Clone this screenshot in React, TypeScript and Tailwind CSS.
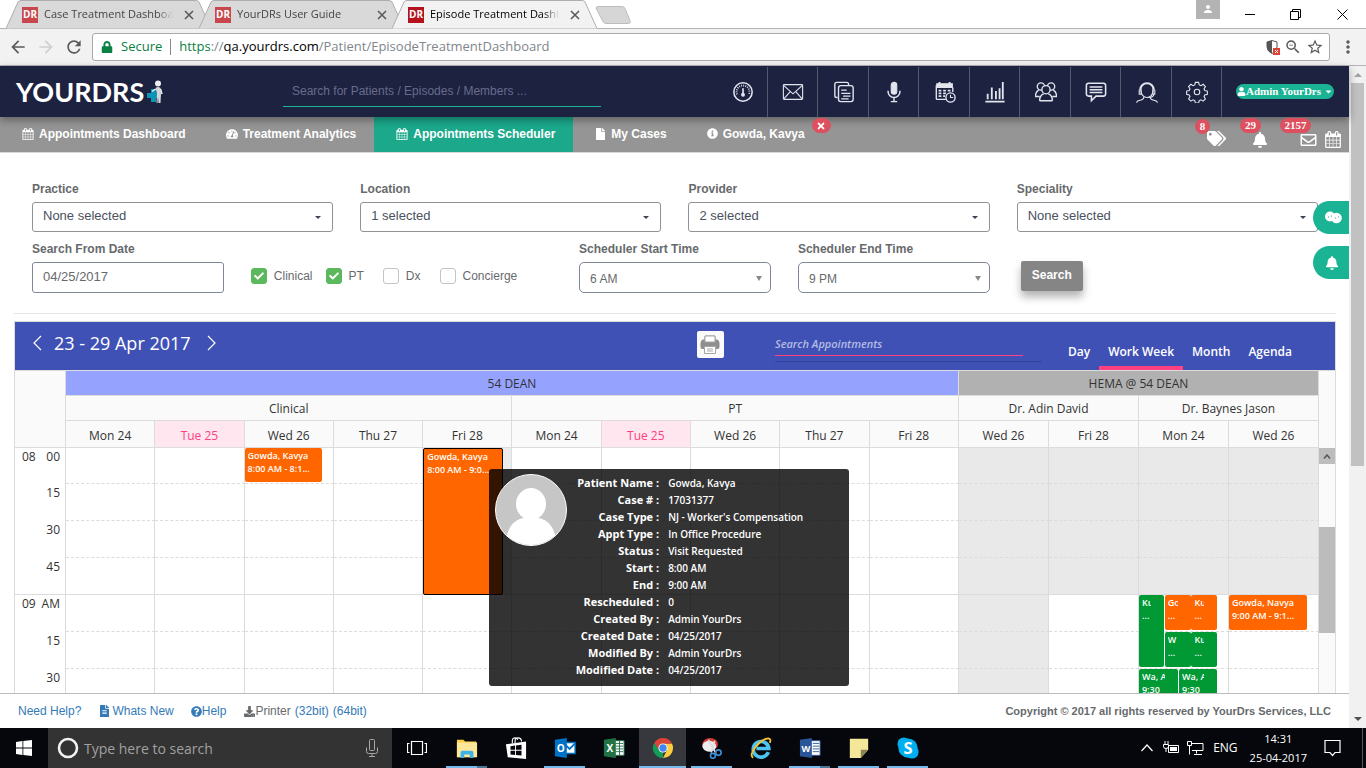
import React from 'react';
import {
  FaTachometerAlt, FaFile, FaInfoCircle, FaTimes, FaTags, FaBell, FaRegEnvelope, FaFileAlt,
  FaQuestionCircle, FaDownload, FaUser, FaCheck, FaCaretDown, FaLock,
} from 'react-icons/fa';
import { MdArrowBack, MdArrowForward, MdRefresh, MdMoreVert, MdPerson, MdStarBorder, MdZoomOut } from 'react-icons/md';

type IconProps = { className?: string };

function CalendarGrid({ className }: IconProps) {
  return (
    <svg viewBox="0 0 1664 1792" className={className} fill="currentColor" aria-hidden="true">
      <path d="M128 1664h288v-288h-288v288zm352 0h320v-288h-320v288zm-352-352h288v-320h-288v320zm352 0h320v-320h-320v320zm-352-384h288v-288h-288v288zm736 736h320v-288h-320v288zm-384-736h320v-288h-320v288zm768 736h288v-288h-288v288zm-384-352h320v-320h-320v320zm-352-864v-288q0-13-9.5-22.5t-22.5-9.5h-64q-13 0-22.5 9.5t-9.5 22.5v288q0 13 9.5 22.5t22.5 9.5h64q13 0 22.5-9.5t9.5-22.5zm736 864h288v-320h-288v320zm-384-384h320v-288h-320v288zm384 0h288v-288h-288v288zm32-480v-288q0-13-9.5-22.5t-22.5-9.5h-64q-13 0-22.5 9.5t-9.5 22.5v288q0 13 9.5 22.5t22.5 9.5h64q13 0 22.5-9.5t9.5-22.5zm384-64v1280q0 52-38 90t-90 38h-1408q-52 0-90-38t-38-90v-1280q0-52 38-90t90-38h128v-96q0-66 47-113t113-47h64q66 0 113 47t47 113v96h384v-96q0-66 47-113t113-47h64q66 0 113 47t47 113v96h128q52 0 90 38t38 90z" />
    </svg>
  );
}

/* ---------- Browser chrome ---------- */

function BrowserTab({ title, active }: { title: string; active?: boolean }) {
  return (
    <div className={`relative -mr-3 h-[29px] w-[205px] ${active ? 'z-10' : ''}`}>
      <svg viewBox="0 0 205 29" preserveAspectRatio="none" className="absolute inset-0 h-full w-full" aria-hidden="true">
        <path d="M0 28.5 L12 2 Q13 0.5 15 0.5 H190 Q192 0.5 193 2 L205 28.5" fill={active ? '#f2f2f2' : '#d9d9d9'} stroke="#aeaeae" />
      </svg>
      <div className="relative flex h-full items-center pl-4 pr-3.5">
        <span className={`flex h-4 w-4 shrink-0 items-center justify-center font-['Open_Sans',sans-serif] text-[10px] font-bold text-white ${active ? 'bg-[#b5121b]' : 'bg-[#c8474d]'}`}>DR</span>
        <button type="button" className={`ml-1.5 flex-1 overflow-hidden whitespace-nowrap text-left text-[11px] [mask-image:linear-gradient(to_right,black_88%,transparent)] ${active ? 'text-black' : 'text-[#444]'}`}>{title}</button>
        <button type="button" aria-label="Close tab" className="ml-2 flex h-4 w-4 items-center justify-center">
          <svg viewBox="0 0 10 10" className="h-2.5 w-2.5" stroke="#5a5a5a" strokeWidth="1.6" aria-hidden="true"><path d="M1 1 9 9M9 1 1 9" /></svg>
        </button>
      </div>
    </div>
  );
}

function Browser() {
  return (
    <div className="shrink-0 font-['Open_Sans',sans-serif]">
      <div className="flex h-[29px] justify-between border-b border-[#b3b3b3] bg-white">
        <div className="flex pl-1.5">
          <BrowserTab title="Case Treatment Dashboard" />
          <BrowserTab title="YourDRs User Guide" />
          <BrowserTab title="Episode Treatment Dashboard" active />
          <button type="button" aria-label="New tab" className="ml-2.5 mt-1.5 h-[19px]">
            <svg viewBox="0 0 36 19" className="h-[19px] w-9" aria-hidden="true"><path d="M2.500.5H27q2 0 3 2l5 12q1 3-1.500 3H11q-2 0-3-2L1.500 3Q.500.500 2.500.5Z" fill="#d6d6d6" stroke="#bcbcbc" /></svg>
          </button>
        </div>
        <div className="flex">
          <button type="button" aria-label="Profile" className="mr-[7px] flex h-[19px] w-6 justify-center bg-[#b3b3b3] pt-[3px] text-white"><MdPerson className="h-3 w-3" /></button>
          <button type="button" aria-label="Minimize" className="flex w-[46px] items-center justify-center"><svg viewBox="0 0 10 10" className="h-2.5 w-2.5" stroke="#000" aria-hidden="true"><path d="M0 5.500H10" /></svg></button>
          <button type="button" aria-label="Restore" className="flex w-[45px] items-center justify-center"><svg viewBox="0 0 11 11" className="h-[11px] w-[11px]" stroke="#000" fill="none" aria-hidden="true"><path d="M.5 2.500h8v8h-8zM2.500 2.500v-2h8v8h-2" /></svg></button>
          <button type="button" aria-label="Close" className="flex w-[48px] items-center justify-center"><svg viewBox="0 0 11 11" className="h-[11px] w-[11px]" stroke="#000" aria-hidden="true"><path d="M.5.5l10 10M10.500.5l-10 10" /></svg></button>
        </div>
      </div>
      <div className="flex h-[37px] items-center border-b border-[#b6b4b6] bg-[#f2f2f2] pl-2 pr-2 text-[#5a5a5a]">
        <button type="button" aria-label="Back"><MdArrowBack className="h-5 w-5" /></button>
        <button type="button" aria-label="Forward" className="ml-2 text-[#cfcfcf]"><MdArrowForward className="h-5 w-5" /></button>
        <button type="button" aria-label="Reload" className="ml-2"><MdRefresh className="h-5 w-5" /></button>
        <div className="ml-2 flex h-7 flex-1 items-center rounded-[3px] border border-[#a9a9a9] bg-white pl-2 pr-[5px]">
          <FaLock className="h-3 w-3 text-[#0b8043]" />
          <span className="ml-2 text-[13px] text-[#0b8043]">Secure</span>
          <span className="mx-2 h-4 w-px bg-[#8a8a8a]" />
          <span className="flex-1 text-[13px] text-[#80868b]"><span className="text-[#0b8043]">https</span>://<span className="text-black">qa.yourdrs.com</span>/Patient/EpisodeTreatmentDashboard</span>
          <svg viewBox="0 0 14 15" className="h-[15px] w-3.5" aria-hidden="true">
            <path d="M6 .5 11 2v5q0 4-5 6.500Q1 11 1 7V2Z" fill="#fff" stroke="#555" />
            <path d="M6 .5V13.500Q1 11 1 7V2Z" fill="#555" />
            <rect x="7" y="8" width="7" height="7" fill="#dd4035" /><path d="M9 10l3 3m0-3-3 3" stroke="#fff" />
          </svg>
          <MdZoomOut className="ml-1 h-[18px] w-[18px]" />
          <MdStarBorder className="ml-1 h-[18px] w-[18px]" />
        </div>
        <button type="button" aria-label="Menu" className="ml-2"><MdMoreVert className="h-5 w-5" /></button>
      </div>
    </div>
  );
}

/* ---------- Application header ---------- */

const toolIcons: { label: string; art: React.ReactNode }[] = [
  { label: 'Dashboard', art: <><circle cx="12" cy="12" r="10" strokeWidth="1.700" /><path d="M5.500 14.500A7 7 0 1 1 18.500 14.500" strokeWidth="2" strokeDasharray="1 1.300" /><path d="M12 8v5" strokeWidth="1.800" /><circle cx="12" cy="15" r="1.500" fill="currentColor" /></> },
  { label: 'Mail', art: <><rect x="1.500" y="4" width="21" height="16" rx="1" /><path d="m2 5 10 9 10-9M2 19.500l7-8M22 19.500l-7-8" /></> },
  { label: 'Documents', art: <><path d="M5 18H4q-2 0-2-2V3.500q0-2 2-2h11q2 0 2 2V5" strokeWidth="1.500" /><rect x="6" y="5" width="16" height="17.500" rx="2.500" strokeWidth="1.500" /><path d="M9 10h6M9 13.500h10M11 16.500h8M9 19.500h8" /></> },
  { label: 'Dictation', art: <><rect x="9" y="1.500" width="6" height="13" rx="3" fill="currentColor" /><path d="M5.500 10.500v1a6.500 6.500 0 0 0 13 0v-1M12 18v4.500M8.500 22.500h7" strokeWidth="1.600" /></> },
  { label: 'Schedule', art: <><path d="M3 3h17v4H3z" fill="currentColor" /><path d="M6 1v4M17 1v4" strokeWidth="2" /><path d="M2.500 5v14q0 1 1 1H13M20.500 7v5" strokeWidth="1.500" /><path d="M5 10.500h3M10 10.500h3M15 10.500h3M5 13.500h3M10 13.500h3M5 16.500h3M10 16.500h2" strokeWidth="2" /><circle cx="18" cy="18" r="5" strokeWidth="1.500" /><path d="M18 15v3h3" /></> },
  { label: 'Reports', art: <path d="M1.500 22.500h21M4 14v6M8.500 7v13M13 11v9M17 8v12M20.500 1v19" strokeWidth="2" /> },
  { label: 'Teams', art: <><circle cx="6.500" cy="6" r="4" strokeWidth="1.500" /><circle cx="17.500" cy="6" r="4" strokeWidth="1.500" /><circle cx="12" cy="9.500" r="4.500" fill="#1d2240" strokeWidth="1.500" /><path d="M4 10q-3.500 2-3.500 7H5M20 10q3.500 2 3.500 7H19M5 21.500q0-6 4.500-7.500M19 21.500q0-6-4.500-7.500M5 21.500h14" strokeWidth="1.600" /></> },
  { label: 'Messages', art: <><path d="M4 2.500h16q2.500 0 2.500 2.500v9q0 2.500-2.500 2.500h-8l-5 5v-5H4Q1.500 16.500 1.500 14V5q0-2.500 2.500-2.500Z" strokeWidth="1.700" /><path d="M5 6.500h14M5 9.500h14M5 12.500h14" strokeWidth="1.500" /></> },
  { label: 'Support', art: <><path d="M4 10a8 8 0 0 1 16 0M5.500 11a6.500 7 0 0 0 13 0V9a6.500 6 0 0 0-13 0Z" /><path d="M3.500 9.500v5h2v-5M20.500 9.500v5h-2v-5M19.500 15q-1 3-6 3M8.500 17.500q0 3-4 3.500Q1 21.500.5 23.500M15.500 17.500q0 3 4 3.500 3.500.5 4 2.500" /></> },
  { label: 'Settings', art: <><circle cx="12" cy="12" r="3" /><path d="M10.200 1.500h3.600l.6 2.800 1.900.8 2.400-1.500 2.500 2.500-1.500 2.400.8 1.900 2.800.6v3.600l-2.800.6-.8 1.900 1.500 2.400-2.500 2.500-2.400-1.500-1.900.8-.6 2.800h-3.600l-.6-2.800-1.900-.8-2.400 1.500-2.500-2.500 1.500-2.400-.8-1.900-2.800-.6v-3.600l2.800-.6.8-1.900-1.500-2.400 2.500-2.500 2.400 1.500 1.900-.8Z" /></> },
];

function AppHeader() {
  return (
    <header className="relative z-20 flex h-[51px] shrink-0 items-center bg-[#1d2240] shadow-[0_3px_8px_rgba(0,0,0,0.35)]">
      <a href="#home" className="ml-4 flex w-[150px] items-center text-white">
        <span className="font-['Lato',sans-serif] text-[27px] font-bold leading-none">YOURDRS</span>
        <svg viewBox="0 0 18 24" className="ml-0.5 h-6 w-[18px]" aria-hidden="true">
          <path d="M5 9h5v4h4v5h-4v4H5v-4H1v-5h4z" fill="#0d93b5" />
          <circle cx="12" cy="3.500" r="3" fill="#eee" />
          <path d="M9.500 8q2.500-2 5 0l.5 6-.5 9h-2l-.5-6-.5 6h-1l.5-9Z" fill="#d3d6da" />
          <path d="M9.500 9 6 11.500M14.500 9l1.500 5" stroke="#eee" strokeWidth="1.500" />
        </svg>
      </a>
      <input aria-label="Search for Patients, Episodes or Members" placeholder="Search for Patients / Episodes / Members ..." className="ml-[117px] h-[31px] w-[318px] border-b border-[#1ab394] bg-transparent px-[9px] text-[12px] outline-none placeholder:text-[#676c8c]" />
      <div className="flex-1" />
      <div className="flex h-[50px] w-[505px]">
        {toolIcons.map((t) => (
          <button key={t.label} type="button" aria-label={t.label} className="flex flex-1 items-center justify-center border-r border-[#555a6b] pl-0.5 text-[#e3e5ee]">
            <svg viewBox="0 0 24 24" className="h-[22px] w-[22px]" fill="none" stroke="currentColor" strokeWidth="1.200" aria-hidden="true">{t.art}</svg>
          </button>
        ))}
      </div>
      <button type="button" className="ml-3.5 mr-[15px] flex h-[15px] w-[98px] items-center justify-center whitespace-nowrap rounded-full bg-[#1ab394] font-['Liberation_Serif',serif] text-[11px] font-bold text-white">
        <FaUser className="h-[9px] w-[9px] shrink-0" />Admin YourDrs<FaCaretDown className="ml-[3px] h-[9px] w-[9px] shrink-0" />
      </button>
    </header>
  );
}

function NavItem({ icon, text, active }: { icon: React.ReactNode; text: string; active?: boolean }) {
  return (
    <a href="#section" className={`flex h-full items-center gap-[5px] whitespace-nowrap pb-0.5 pl-[22px] pr-[18px] text-[12px] font-bold text-white ${active ? 'bg-[#1ba88b]' : ''}`}>{icon}{text}</a>
  );
}

function Badge({ children, className }: { children: React.ReactNode; className: string }) {
  return <span className={`absolute flex h-[15px] items-center justify-center rounded-full bg-[#dd5060] font-['Liberation_Serif',serif] text-[11px] font-bold text-white ${className}`}>{children}</span>;
}

function Nav() {
  return (
    <nav className="flex h-9 shrink-0 justify-between border-b border-[#d8d8d8] bg-[#959595]">
      <div className="flex h-full">
        <NavItem icon={<CalendarGrid className="h-3 w-3" />} text="Appointments Dashboard" />
        <NavItem icon={<FaTachometerAlt className="h-3 w-3" />} text="Treatment Analytics" />
        <NavItem icon={<CalendarGrid className="h-3 w-3" />} text="Appointments Scheduler" active />
        <NavItem icon={<FaFile className="h-3 w-[11px]" />} text="My Cases" />
        <div className="relative z-30">
          <NavItem icon={<FaInfoCircle className="h-[11px] w-[11px]" />} text="Gowda, Kavya" />
          <button type="button" aria-label="Close Gowda, Kavya" className="absolute -right-2 top-px flex h-[15px] w-[19px] items-center justify-center rounded-full bg-[#dd5060] text-white"><FaTimes className="h-2.5 w-2.5" /></button>
        </div>
      </div>
      <div className="relative z-30 flex items-end pb-1 pr-2 text-white">
        <a href="#tags" aria-label="Tags" className="relative mr-[26px]"><FaTags className="h-[19px] w-[19px]" /><Badge className="-left-3 -top-2.5 w-[15px]">8</Badge></a>
        <a href="#alerts" aria-label="Alerts" className="relative mr-8 block"><FaBell className="h-4 w-4" /><Badge className="-left-3 -top-3.5 w-[21px]">29</Badge></a>
        <a href="#mail" aria-label="Mail" className="relative mr-2"><FaRegEnvelope className="h-4 w-[17px]" /><Badge className="-left-5 -top-3.5 w-[31px]">2157</Badge></a>
        <a href="#calendar" aria-label="Calendar"><CalendarGrid className="h-[17px] w-4" /></a>
      </div>
    </nav>
  );
}

/* ---------- Filters ---------- */

const labelCls = 'mb-1 block h-[18px] text-[12px] font-bold leading-[18px] text-[#676a6c]';

function MultiSelect({ id, label, value }: { id: string; label: string; value: string }) {
  return (
    <div className="col-span-3">
      <label htmlFor={id} className={labelCls}>{label}</label>
      <div className="relative">
        <select id={id} className="h-[30px] w-full appearance-none rounded-[3px] border border-[#8f9297] bg-white px-2.5 pb-[3px] text-[13px] text-[#4a5160] outline-none"><option>{value}</option></select>
        <svg viewBox="0 0 6 3" className="pointer-events-none absolute right-3 top-3.5 h-[3px] w-1.5" aria-hidden="true"><path d="M0 0h6L3 3Z" fill="#3b4452" /></svg>
      </div>
    </div>
  );
}

function TimeSelect({ id, label, value }: { id: string; label: string; value: string }) {
  return (
    <>
      <label htmlFor={id} className={labelCls}>{label}</label>
      <div className="relative">
        <select id={id} className="h-[31px] w-full appearance-none rounded-[5px] border border-[#80879a] bg-white px-2.5 pt-0.5 text-[12px] text-[#676a6c] outline-none"><option>{value}</option></select>
        <svg viewBox="0 0 6 5" className="pointer-events-none absolute right-[9px] top-3.5 h-[5px] w-1.5" aria-hidden="true"><path d="M0 0h6L3 5Z" fill="#888" /></svg>
      </div>
    </>
  );
}

function Check({ label, on, gap }: { label: string; on?: boolean; gap: string }) {
  return (
    <label className={`flex items-center gap-[7px] text-[12px] text-[#676a6c] ${gap}`}>
      <span className="relative flex h-4 w-4">
        <input type="checkbox" defaultChecked={on} className="peer h-4 w-4 appearance-none rounded-[3px] border border-[#c4c4c4] bg-white checked:border-[#5cb85c] checked:bg-[#5cb85c]" />
        <FaCheck className="pointer-events-none absolute left-[3px] top-[3px] hidden h-2.5 w-2.5 text-white peer-checked:block" />
      </span>
      {label}
    </label>
  );
}

function Filters() {
  return (
    <form className="ml-[14px] mr-[13px] grid shrink-0 grid-cols-12 gap-x-[27px] gap-y-2 border-b border-[#e4e4e4] px-[18px] pb-5 pt-[27px]" onSubmit={(e) => e.preventDefault()}>
      <MultiSelect id="practice" label="Practice" value="None selected" />
      <MultiSelect id="location" label="Location" value="1 selected" />
      <MultiSelect id="provider" label="Provider" value="2 selected" />
      <MultiSelect id="speciality" label="Speciality" value="None selected" />
      <div className="col-span-2">
        <label htmlFor="from" className={labelCls}>Search From Date</label>
        <input id="from" defaultValue="04/25/2017" className="h-[31px] w-full rounded-[3px] border border-[#80879a] bg-white px-2.5 pb-0.5 text-[13px] text-[#676a6c] outline-none" />
      </div>
      <div className="col-span-3 flex items-center whitespace-nowrap pt-[19px]">
        <Check label="Clinical" on gap="" />
        <Check label="PT" on gap="ml-[13px]" />
        <Check label="Dx" gap="ml-[19px]" />
        <Check label="Concierge" gap="ml-[19px]" />
      </div>
      <div className="col-span-2"><TimeSelect id="start" label="Scheduler Start Time" value="6 AM" /></div>
      <div className="col-span-2"><TimeSelect id="end" label="Scheduler End Time" value="9 PM" /></div>
      <div className="col-span-3 pl-1 pt-[21px]">
        <button type="submit" className="h-[30px] w-[62px] rounded-[2px] bg-[#858585] pb-[3px] text-[12px] font-bold text-white shadow-[0_6px_8px_rgba(0,0,0,0.3)]">Search</button>
      </div>
    </form>
  );
}

/* ---------- Scheduler ---------- */

type Appt = { box: string; color: 'orange' | 'green'; name: string; time: string; selected?: boolean };

const days = ['Mon 24', 'Tue 25', 'Wed 26', 'Thu 27', 'Fri 28', 'Mon 24', 'Tue 25', 'Wed 26', 'Thu 27', 'Fri 28', 'Wed 26', 'Fri 28', 'Mon 24', 'Wed 26'];

const slots: { hour: string; minute: string; appts: Record<number, Appt[]> }[] = [
  {
    hour: '08', minute: '00', appts: {
      2: [{ box: 'left-0 w-[88%] h-[34px]', color: 'orange', name: 'Gowda, Kavya', time: '8:00 AM - 8:1...' }],
      4: [{ box: 'left-0 w-[90%] h-[147px]', color: 'orange', name: 'Gowda, Kavya', time: '8:00 AM - 9:0...', selected: true }],
    },
  },
  { hour: '', minute: '15', appts: {} },
  { hour: '', minute: '30', appts: {} },
  { hour: '', minute: '45', appts: {} },
  {
    hour: '09', minute: 'AM', appts: {
      12: [
        { box: 'left-0 w-[28%] h-[72px]', color: 'green', name: 'Ku', time: '...' },
        { box: 'left-[29%] w-[29%] h-[35px]', color: 'orange', name: 'Go', time: '...' },
        { box: 'left-[59%] w-[29%] h-[35px]', color: 'orange', name: 'Ku', time: '...' },
      ],
      13: [{ box: 'left-0 w-[88%] h-[35px]', color: 'orange', name: 'Gowda, Navya', time: '9:00 AM - 9:1...' }],
    },
  },
  {
    hour: '', minute: '15', appts: {
      12: [
        { box: 'left-[29%] w-[29%] h-[35px]', color: 'green', name: 'W', time: '...' },
        { box: 'left-[59%] w-[29%] h-[35px]', color: 'green', name: 'Ku', time: '...' },
      ],
    },
  },
  {
    hour: '', minute: '30', appts: {
      12: [
        { box: 'left-0 w-[44%] h-[35px]', color: 'green', name: 'Wa, A', time: '9:30' },
        { box: 'left-[45%] w-[43%] h-[35px]', color: 'green', name: 'Wa, A', time: '9:30' },
      ],
    },
  },
];

function Event({ a }: { a: Appt }) {
  return (
    <div className={`absolute top-0 z-[1] overflow-hidden rounded-[2px] pl-[3px] pt-px text-[9px] font-semibold leading-[13px] text-white ${a.box} ${a.color === 'orange' ? 'bg-[#ff6600]' : 'bg-[#009933]'} ${a.selected ? 'border border-black' : ''}`}>
      <div className="mr-[13px] overflow-hidden whitespace-nowrap">{a.name}</div>
      <div className="whitespace-nowrap">{a.time}</div>
    </div>
  );
}

const details: [string, string][] = [
  ['Patient Name', 'Gowda, Kavya'], ['Case #', '17031377'], ['Case Type', "NJ - Worker's Compensation"],
  ['Appt Type', 'In Office Procedure'], ['Status', 'Visit Requested'], ['Start', '8:00 AM'], ['End', '9:00 AM'],
  ['Rescheduled', '0'], ['Created By', 'Admin YourDrs'], ['Created Date', '04/25/2017'],
  ['Modified By', 'Admin YourDrs'], ['Modified Date', '04/25/2017'],
];

function Tooltip() {
  return (
    <div role="tooltip" className="absolute left-[66px] top-[21px] z-10 flex h-[217px] w-[360px] rounded-[3px] bg-black/80 pl-1.5 pt-[5px] text-left text-white">
      <svg viewBox="0 0 72 72" className="h-[72px] w-[72px] shrink-0" aria-hidden="true">
        <clipPath id="avatar"><circle cx="36" cy="36" r="35" /></clipPath>
        <circle cx="36" cy="36" r="35.500" fill="#c6c6c6" stroke="#fff" />
        <g clipPath="url(#avatar)" fill="#fff"><ellipse cx="36" cy="30" rx="15" ry="16" /><path d="M11 66q3-23 25-23t25 23v8H11Z" /></g>
      </svg>
      <dl className="grid flex-1 auto-rows-[17px] grid-cols-[92px_1fr] gap-x-[9px] whitespace-nowrap">
        {details.map(([k, v]) => (
          <React.Fragment key={k}>
            <dt className="text-right text-[11px] font-bold leading-[17px]">{k} :</dt>
            <dd className="pt-px text-[10px] font-semibold leading-[17px]">{v}</dd>
          </React.Fragment>
        ))}
      </dl>
    </div>
  );
}

const cell = 'border-b border-r border-[#dcdcdc] px-0 pb-0 pt-px font-normal text-center leading-[18px]';

function Scheduler() {
  return (
    <section className="ml-[14px] mr-[13px] mt-[7px] flex min-h-0 flex-1 flex-col overflow-hidden border-x border-t border-[#dcdcdc] font-['Open_Sans',sans-serif]">
      <div className="flex h-[49px] shrink-0 border-b border-[#dcdcdc] bg-[#3f51b5] text-white">
        <div className="flex h-[42px] flex-1 items-center pl-[17px]">
          <button type="button" aria-label="Previous week"><svg viewBox="0 0 10 16" className="h-4 w-2.5" fill="none" stroke="#fff" strokeWidth="1.200" aria-hidden="true"><path d="M9 1 2 8l7 7" /></svg></button>
          <h1 className="ml-3 mr-4 whitespace-nowrap text-[18px] font-medium">23 - 29 Apr 2017</h1>
          <button type="button" aria-label="Next week"><svg viewBox="0 0 10 16" className="h-4 w-2.5" fill="none" stroke="#fff" strokeWidth="1.200" aria-hidden="true"><path d="m1 1 7 7-7 7" /></svg></button>
        </div>
        <button type="button" aria-label="Print" className="mt-[9px] flex h-[27px] w-[27px] items-center justify-center rounded-[2px] bg-[#fafafa]">
          <svg viewBox="0 0 20 19" className="h-[19px] w-5" aria-hidden="true">
            <path d="M5 7V1h10v6" fill="#fff" stroke="#999" /><path d="M2.500 4.500h15Q19.500 6 19.500 8v4q0 2-2 2h-15q-2 0-2-2V8q0-2 2-3.500Z" fill="#8f8f8f" /><path d="M5 1h10v6H5zM4.500 11.500h11v7h-11z" fill="#fff" stroke="#a5a5a5" /><path d="M7 14h6M7 16h6" stroke="#aaa" />
          </svg>
        </button>
        <div className="ml-[51px] mr-[17px] h-10 w-[267px] border-b border-[#34449c]">
          <input aria-label="Search Appointments" placeholder="Search Appointments" className="mt-[10px] block h-6 w-[248px] border-b border-[#ff4081] bg-transparent text-[11px] font-semibold italic outline-none placeholder:text-[#b4bbe4]" />
        </div>
        <div className="mr-[34px] flex items-stretch text-[12px] font-semibold">
          {['Day', 'Work Week', 'Month', 'Agenda'].map((t) => (
            <button key={t} type="button" className={`border-b-4 px-[9px] pt-[15px] ${t === 'Work Week' ? 'border-[#ff4081]' : 'border-transparent'}`}>{t}</button>
          ))}
        </div>
      </div>
      <div className="flex min-h-0 flex-1 items-start overflow-hidden">
        <table className="w-0 flex-1 table-fixed border-separate border-spacing-0 text-[12px] text-[#333]">
          <colgroup><col className="w-[51px]" />{days.map((_, i) => <col key={i} className={i > 9 ? 'w-[90px]' : ''} />)}</colgroup>
          <thead className="bg-[#fafafa]">
            <tr className="h-[25px]">
              <td rowSpan={3} className={cell} />
              <th scope="colgroup" colSpan={10} className={`${cell} bg-[#95a3ff]`}>54 DEAN</th>
              <th scope="colgroup" colSpan={4} className={`${cell} bg-[#b1b1b1]`}>HEMA @ 54 DEAN</th>
            </tr>
            <tr className="h-[25px]">
              <th scope="colgroup" colSpan={5} className={cell}>Clinical</th>
              <th scope="colgroup" colSpan={5} className={cell}>PT</th>
              <th scope="colgroup" colSpan={2} className={cell}>Dr. Adin David</th>
              <th scope="colgroup" colSpan={2} className={cell}>Dr. Baynes Jason</th>
            </tr>
            <tr className="h-[27px]">
              {days.map((d, i) => <th key={i} scope="col" className={`border-b border-r border-[#dcdcdc] px-0 pb-0 pt-[3px] text-center font-normal leading-[18px] ${d === 'Tue 25' ? 'bg-[#ffe6ef] text-[#ff4081]' : ''}`}>{d}</th>)}
            </tr>
          </thead>
          <tbody>
            {slots.map((s, r) => (
              <tr key={r} className={r === 0 ? 'h-9' : 'h-[37px]'}>
                <th scope="row" className={`border-r border-[#dcdcdc] p-0 align-top font-normal ${r === 3 ? 'border-b' : ''}`}>
                  <div className="flex justify-between pl-[7px] pr-[5px] leading-[17px]"><span>{s.hour}</span><span>{s.minute}</span></div>
                </th>
                {days.map((_, c) => {
                  const shade = (c >= 10 && r < 4) || c === 10 ? 'bg-[#e9e9e9]' : c === 4 && r < 4 ? 'bg-[#ececec]' : '';
                  return (
                    <td key={c} className={`relative border-b border-r border-[#dcdcdc] p-0 text-left ${r === 3 ? '' : '[border-bottom-style:dashed]'} ${shade}`}>
                      {(s.appts[c] ?? []).map((a, i) => <Event key={i} a={a} />)}
                      {r === 0 && c === 4 && <Tooltip />}
                    </td>
                  );
                })}
              </tr>
            ))}
          </tbody>
        </table>
        <div className="flex h-full w-4 shrink-0 flex-col bg-[#fafafa]">
          <div className="h-[77px] shrink-0" />
          <button type="button" aria-label="Scroll up" className="flex h-4 w-full shrink-0 items-center justify-center bg-[#bdbdbd]"><svg viewBox="0 0 8 5" className="h-[5px] w-2" fill="none" stroke="#555" strokeWidth="1.500" aria-hidden="true"><path d="m1 4.500 3-3.500 3 3.500" /></svg></button>
          <div className="mt-[63px] h-[106px] w-full shrink-0 bg-[#bcbcbc]" />
        </div>
      </div>
    </section>
  );
}

function SideTabs() {
  return (
    <div className="absolute right-0 top-[135px] z-20 flex flex-col gap-3 text-white">
      <button type="button" aria-label="Reactions" className="flex h-[33px] w-9 items-center justify-center rounded-l-full bg-[#1ab394] pl-1">
        <svg viewBox="0 0 18 13" className="h-[13px] w-[18px]" aria-hidden="true"><circle cx="6" cy="5.500" r="5" fill="#fff" /><circle cx="12.500" cy="7" r="5.300" fill="#fff" /><path d="M4 6h1M7 5h1M11 7h1M14 6h1" stroke="#1ab394" fill="none" /></svg>
      </button>
      <button type="button" aria-label="Notifications" className="flex h-[33px] w-9 items-center justify-center rounded-l-full bg-[#1ab394] pl-0.5"><FaBell className="h-3.5 w-3.5" /></button>
    </div>
  );
}

function Footer() {
  const link = 'flex items-center text-[#337ab7]';
  return (
    <footer className="flex h-[35px] shrink-0 items-center justify-between border-t border-[#bbb] bg-white pl-[18px] pr-[18px] text-[12px] text-[#676a6c]">
      <div className="flex whitespace-nowrap">
        <a href="#need-help" className={link}>Need Help?</a>
        <a href="#new" className={`${link} ml-[18px] gap-0.5`}><FaFileAlt className="h-3 w-[11px]" />Whats New</a>
        <a href="#help" className={`${link} ml-[17px]`}><FaQuestionCircle className="h-[11px] w-[11px]" />Help</a>
        <span className="ml-[18px] flex items-center gap-1"><span className="flex items-center"><FaDownload className="h-[11px] w-[11px]" />Printer</span><a href="#p32" className={link}>(32bit)</a><a href="#p64" className={link}>(64bit)</a></span>
      </div>
      <p className="text-[11px] font-bold">Copyright © 2017 all rights reserved by YourDrs Services, LLC</p>
    </footer>
  );
}

/* ---------- Taskbar ---------- */

const txt = { fontFamily: 'Open Sans, sans-serif', fontWeight: 700, fill: '#fff', textAnchor: 'middle' as const };

const apps: { name: string; line?: 'one' | 'two' | 'full'; art: React.ReactNode }[] = [
  { name: 'File Explorer', line: 'two', art: <><path d="M1 3h7l2 2h12v17H1z" fill="#ffcf4a" /><path d="M1 6h22v16H1z" fill="#ffe79a" /><path d="M5 23v-6q0-2 2-2h10q2 0 2 2v6h-4v-4H9v4z" fill="#3db2e8" /></> },
  { name: 'Store', art: <><path d="M8 7V4q0-3 3-3 2 0 3 2M11 7V4q0-3 3-3 4 0 4 4" fill="none" stroke="#fff" strokeWidth="1.200" /><path d="m1 8 22-3v19L3 22z" fill="#fff" /><path d="m6 10 5-.6V14H6zM12 9.200l6-.8V14h-6zM6 15h5v4.500L6 19zM12 15h6v5.300l-6-.7z" fill="#05070c" /></> },
  { name: 'Outlook', line: 'one', art: <><path d="M11 6h12v12H11z" fill="#fff" stroke="#0072c6" strokeWidth="1.500" /><path d="m12 8 5 5 6-6" fill="none" stroke="#0072c6" strokeWidth="2" /><path d="m1 3 13-2v22L1 21z" fill="#0072c6" /><text x="7.500" y="16" fontSize="11" {...txt}>O</text></> },
  { name: 'Excel', art: <><path d="M12 4h11v16H12z" fill="#fff" stroke="#207245" /><path d="M14 7h8M14 10h8M14 13h8M14 16h8M18 4v16" stroke="#207245" /><path d="m1 3 13-2v22L1 21z" fill="#207245" /><text x="7.500" y="16" fontSize="11" {...txt}>X</text></> },
  { name: 'Chrome', line: 'full', art: <><path d="M12 12v11A11 11 0 0 1 2.470 6.500Z" fill="#0f9d58" /><path d="M12 7h9.800q1.200 2.500 1.200 5a11 11 0 0 1-11 11l4.400-8.500z" fill="#ffcd40" /><path d="M7.600 14.500 2.470 6.500Q5.500 1 12 1q7 0 9.800 6H12Z" fill="#db4437" /><circle cx="12" cy="12" r="5" fill="#fff" /><circle cx="12" cy="12" r="4" fill="#4285f4" /></> },
  { name: 'Snipping Tool', line: 'one', art: <><ellipse cx="10" cy="8" rx="8.500" ry="7" fill="#d33a34" /><ellipse cx="9" cy="10" rx="7.500" ry="6" fill="#eee" /><path d="m8 3 8 14M15 4l-4 13" stroke="#ddd" strokeWidth="2" /><circle cx="19" cy="17" r="3" fill="none" stroke="#3c8ed0" strokeWidth="1.800" /><circle cx="13" cy="20.500" r="2.700" fill="none" stroke="#3c8ed0" strokeWidth="1.800" /></> },
  { name: 'Internet Explorer', art: <><path d="M20 16.500A8.500 8.500 0 1 1 20.500 12.500H7" fill="none" stroke="#4cc3f0" strokeWidth="4" /><path d="M3.500 22.500Q-1 20 6 11 14 1.500 20 1.500q3.500.5 1.500 5" fill="none" stroke="#f6c52c" strokeWidth="2" /></> },
  { name: 'Word', line: 'two', art: <><path d="M12 4h11v16H12z" fill="#fff" stroke="#2a5699" /><path d="M15 7h7M15 10h7M15 13h7M15 16h7" stroke="#2a5699" /><path d="m1 3 13-2v22L1 21z" fill="#2a5699" /><text x="7.500" y="16" fontSize="10" {...txt}>W</text></> },
  { name: 'Sticky Notes', line: 'one', art: <><path d="M2 2h20v12l-8 9H2z" fill="#f4e79a" /><path d="M14 14h8l-8 9z" fill="#8d8550" /></> },
  { name: 'Skype', line: 'one', art: <><circle cx="7.500" cy="7.500" r="7" fill="#00aff0" /><circle cx="16.500" cy="16.500" r="7" fill="#00aff0" /><circle cx="12" cy="12" r="10.500" fill="#00aff0" /><text x="12" y="18" fontSize="18" {...txt}>S</text></> },
];

function Taskbar() {
  return (
    <div className="flex h-10 shrink-0 bg-[#05070c] font-['Open_Sans',sans-serif] text-white">
      <button type="button" aria-label="Start" className="flex w-12 items-center justify-center"><svg viewBox="0 0 16 16" className="h-4 w-4" fill="#fff" aria-hidden="true"><path d="m0 2 6.500-.9v6.400H0zM7.300 1 16 0v7.500H7.300zM0 8.400h6.500v6.500L0 14zM7.300 8.400H16V16l-8.700-1z" /></svg></button>
      <div className="flex w-[344px] items-center bg-[#333] pl-[9px] pr-3.5">
        <svg viewBox="0 0 22 22" className="h-[22px] w-[22px]" fill="none" stroke="#f2f2f2" strokeWidth="2.600" aria-hidden="true"><circle cx="11" cy="11" r="9" /></svg>
        <input aria-label="Type here to search" placeholder="Type here to search" className="ml-[5px] w-0 flex-1 bg-transparent text-[14px] outline-none placeholder:text-[#a0a0a0]" />
        <svg viewBox="0 0 12 18" className="h-[18px] w-3" fill="none" stroke="#a8a8a8" aria-hidden="true"><rect x="3.500" y=".5" width="5" height="11" rx="1" /><path d="M.5 8.500v4q0 2 2 2h7q2 0 2-2v-4M6 14.500v3M3 17.500h6" /></svg>
      </div>
      <button type="button" aria-label="Task View" className="flex w-[50px] items-center justify-center"><svg viewBox="0 0 20 16" className="h-4 w-5" fill="none" stroke="#fff" strokeWidth="1.200" aria-hidden="true"><path d="M4.500 1.500h11v13h-11zM2.500 3.500h-2v9h2M17.500 3.500h2v9h-2" /></svg></button>
      {apps.map((a) => (
        <button key={a.name} type="button" aria-label={a.name} className={`relative flex items-center justify-center ${a.line === 'full' ? 'mx-px w-[47px] bg-[#36383d]' : 'w-[49px]'}`}>
          <svg viewBox="0 0 24 24" className="h-[22px] w-[22px]" aria-hidden="true">{a.art}</svg>
          {a.line && <span className={`absolute bottom-0 flex h-0.5 justify-end bg-[#76b9ed] ${a.line === 'full' ? 'inset-x-0' : 'inset-x-1'}`}>{a.line === 'two' && <span className="h-0.5 w-2.5 bg-[#4b7699]" />}</span>}
        </button>
      ))}
      <div className="flex-1" />
      <div className="flex items-center pr-[3px] text-[12px]">
        <svg viewBox="0 0 12 8" className="h-2 w-3" fill="none" stroke="#fff" strokeWidth="1.200" aria-hidden="true"><path d="m.5 7 5.500-6 5.500 6" /></svg>
        <svg viewBox="0 0 17 14" className="ml-2.5 h-3.5 w-[17px]" fill="none" stroke="#fff" aria-hidden="true"><path d="M5.500 4.500h10v7h-10z" /><path d="M7 6h7v4H7z" fill="#fff" stroke="none" /><path d="M2 0v3M5 0v3M.5 3.500h5v2q0 2-2.500 2t-2.500-2zM3 7v4" /></svg>
        <svg viewBox="0 0 17 14" className="ml-[7px] h-3.5 w-[17px]" fill="none" stroke="#fff" aria-hidden="true"><path d="M5 2.500h11v7H5M9.500 9.500v3M7 13.500h8M.5.5h4v4h-4zM2.500 4.500v9" /></svg>
        <span className="ml-[9px]">ENG</span>
        <div className="ml-3 text-center text-[11px] leading-[19px]"><div>14:31</div><div>25-04-2017</div></div>
        <svg viewBox="0 0 17 18" className="ml-[17px] h-[18px] w-[17px]" fill="none" stroke="#fff" strokeWidth="1.200" aria-hidden="true"><path d="M1 1.500h15v12h-5L8.500 16.500 6 13.500H1z" /></svg>
        <span className="ml-[21px] h-10 w-px bg-[#55585e]" />
      </div>
    </div>
  );
}

export default function App() {
  return (
    <div className="flex h-screen flex-col overflow-hidden bg-white">
      <Browser />
      <div className="flex min-h-0 flex-1 font-['Liberation_Sans',Arial,sans-serif]">
        <div className="relative flex min-w-0 flex-1 flex-col">
          <AppHeader />
          <Nav />
          <main className="flex min-h-0 flex-1 flex-col"><Filters /><Scheduler /></main>
          <SideTabs />
          <Footer />
        </div>
        <div className="flex w-[17px] shrink-0 flex-col items-center justify-between bg-[#f1f1f1]">
          <svg viewBox="0 0 8 17" className="h-[17px] w-2" aria-hidden="true"><path d="M0 11h8L4 7Z" fill="#a3a3a3" /></svg>
          <div className="w-[13px] flex-1"><div className="h-[61%] w-full bg-[#c1c1c1]" /></div>
          <svg viewBox="0 0 8 17" className="h-[17px] w-2" aria-hidden="true"><path d="M0 6h8l-4 4Z" fill="#505050" /></svg>
        </div>
      </div>
      <Taskbar />
    </div>
  );
}
